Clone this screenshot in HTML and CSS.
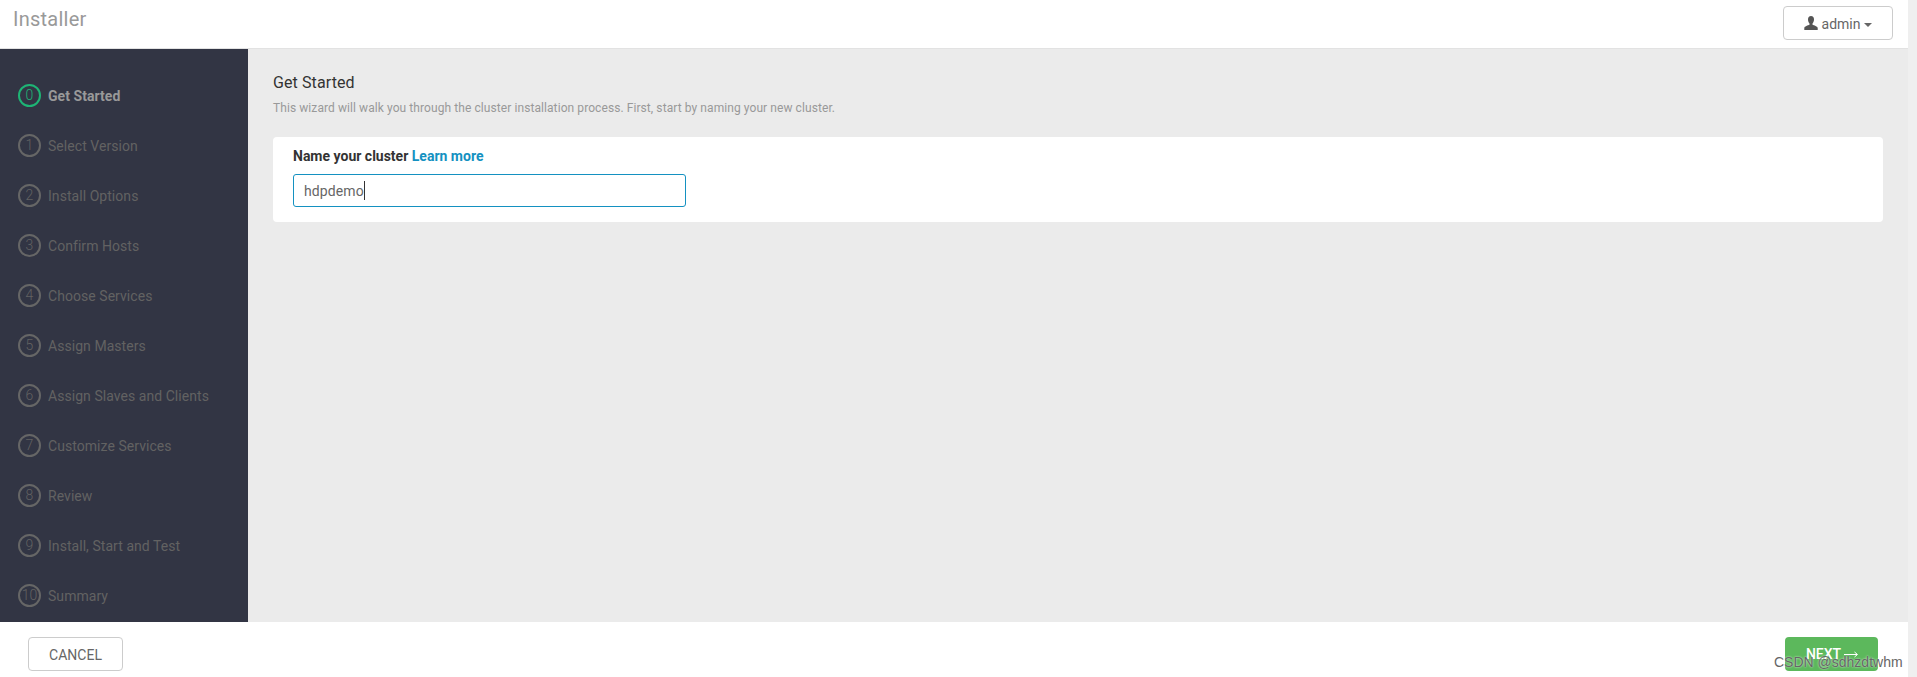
FILE: index.html
```html
<!DOCTYPE html>
<html lang="en">
<head>
<meta charset="utf-8">
<title>Installer</title>
<link rel="stylesheet" href="styles.css">
</head>
<body>
<div class="app">
  <header class="topbar">
    <div class="brand">Installer</div>
    <button class="btn user-btn">
      <svg class="user-icon" viewBox="0 0 14 14" width="14" height="14"><path d="M7 0C5 0 4 1.500 4 3.500C4 5.300 4.700 6.700 5.500 7.500V8.800C4 9.500 0.500 10.300 0.300 12V14H13.700V12C13.500 10.300 10 9.500 8.500 8.800V7.500C9.300 6.700 10 5.300 10 3.500C10 1.500 9 0 7 0Z"/></svg>
      <span>admin</span>
      <span class="caret"></span>
    </button>
  </header>
  <div class="middle">
    <nav class="sidebar">
      <div class="step active"><span class="num">0</span><span class="label">Get Started</span></div>
      <div class="step"><span class="num">1</span><span class="label">Select Version</span></div>
      <div class="step"><span class="num">2</span><span class="label">Install Options</span></div>
      <div class="step"><span class="num">3</span><span class="label">Confirm Hosts</span></div>
      <div class="step"><span class="num">4</span><span class="label">Choose Services</span></div>
      <div class="step"><span class="num">5</span><span class="label">Assign Masters</span></div>
      <div class="step"><span class="num">6</span><span class="label">Assign Slaves and Clients</span></div>
      <div class="step"><span class="num">7</span><span class="label">Customize Services</span></div>
      <div class="step"><span class="num">8</span><span class="label">Review</span></div>
      <div class="step"><span class="num">9</span><span class="label">Install, Start and Test</span></div>
      <div class="step"><span class="num">10</span><span class="label">Summary</span></div>
    </nav>
    <main class="content">
      <h1 class="title">Get Started</h1>
      <p class="intro">This wizard will walk you through the cluster installation process. First, start by naming your new cluster.</p>
      <section class="card">
        <div class="field-label">Name your cluster <a class="link">Learn more</a></div>
        <div class="input"><span>hdpdemo</span><span class="cursor"></span></div>
      </section>
    </main>
  </div>
  <footer class="footer">
    <button class="btn cancel">CANCEL</button>
    <button class="next"><span>NEXT</span><svg class="arrow" viewBox="0 0 14 7" width="14" height="7"><path d="M0 3.500H13M10.500 1L13.500 3.500L10.500 6" fill="none" stroke="#fff" stroke-width="1"/></svg></button>
    <span class="watermark">CSDN @sdhzdtwhm</span>
  </footer>
</div>
</body>
</html>
```
FILE: styles.css
```css
* { box-sizing: border-box; }
html, body { margin: 0; height: 100%; overflow: hidden; }
body { background: #efefef; font-family: Roboto, "Liberation Sans", sans-serif; }
.app { width: 1908px; height: 677px; display: flex; flex-direction: column; position: relative; }
.topbar { height: 49px; flex: none; background: #fff; border-bottom: 1px solid #e2e2e2; display: flex; justify-content: space-between; padding: 6px 15px 0 13px; }
.brand { font-size: 20px; line-height: 24px; color: #999; margin-top: 1px; letter-spacing: 0.25px; }
.btn { background: #fff; border: 1px solid #ccc; border-radius: 4px; font-family: inherit; font-size: 14px; color: #666; padding: 0; }
.user-btn { width: 110px; height: 34px; display: flex; align-items: center; justify-content: center; gap: 4px; padding-top: 1px; }
.user-icon { fill: #555; display: block; margin-top: -1px; }
.caret { width: 0; height: 0; border-left: 4px solid transparent; border-right: 4px solid transparent; border-top: 4px solid #666; margin-top: 2px; }
.middle { flex: 1; display: flex; min-height: 0; }
.sidebar { width: 248px; flex: none; background: #323544; padding: 35px 0 0 18px; display: flex; flex-direction: column; gap: 27px; }
.step { display: flex; align-items: center; height: 23px; color: #626262; font-size: 14px; letter-spacing: 0.05px; }
.num { width: 23px; height: 23px; flex: none; border: 2px solid #666; border-radius: 50%; display: flex; align-items: center; justify-content: center; font-size: 14px; font-weight: 300; margin-right: 7px; padding-bottom: 2px; letter-spacing: 0; }
.step.active { color: #999; }
.step.active .label { font-weight: 700; }
.step.active .num { border-color: #1eb475; color: #1eb475; }
.content { flex: 1; background: #ebebeb; padding: 0 25px 0 25px; }
.title { margin: 23px 0 0; font-size: 16px; line-height: 22px; font-weight: 400; color: #333; letter-spacing: 0.1px; }
.intro { margin: 6px 0 0; font-size: 12px; line-height: 16px; color: #999; letter-spacing: 0.08px; }
.card { margin-top: 21px; height: 85px; background: #fff; border-radius: 4px; padding: 10px 20px 0; }
.field-label { font-size: 14px; line-height: 18px; font-weight: 700; color: #333; }
.link { color: #1491c1; }
.input { margin-top: 9px; width: 393px; height: 33px; border: 1px solid #1491c1; border-radius: 3px; display: flex; align-items: center; padding-left: 10px; font-size: 14px; color: #666; letter-spacing: 0.1px; }
.cursor { width: 1px; height: 19px; background: #333; }
.footer { height: 55px; flex: none; background: #fff; display: flex; justify-content: space-between; align-items: flex-start; padding: 15px 30px 0 28px; position: relative; }
.cancel { width: 95px; height: 34px; color: #666; padding-top: 2px; }
.next { width: 93px; height: 34px; background: #5cb85c; border: 0; border-radius: 4px; color: #fff; font-family: inherit; font-size: 14px; font-weight: 500; padding: 0 0 0 1px; display: flex; align-items: center; justify-content: center; gap: 3px; }
.arrow { display: block; }
.watermark { position: absolute; left: 1774px; top: 32px; font-family: "Liberation Sans", sans-serif; font-size: 14px; line-height: 16px; color: #666; white-space: nowrap; text-shadow: 0 0 2px rgba(255, 255, 255, 0.9); }
```
